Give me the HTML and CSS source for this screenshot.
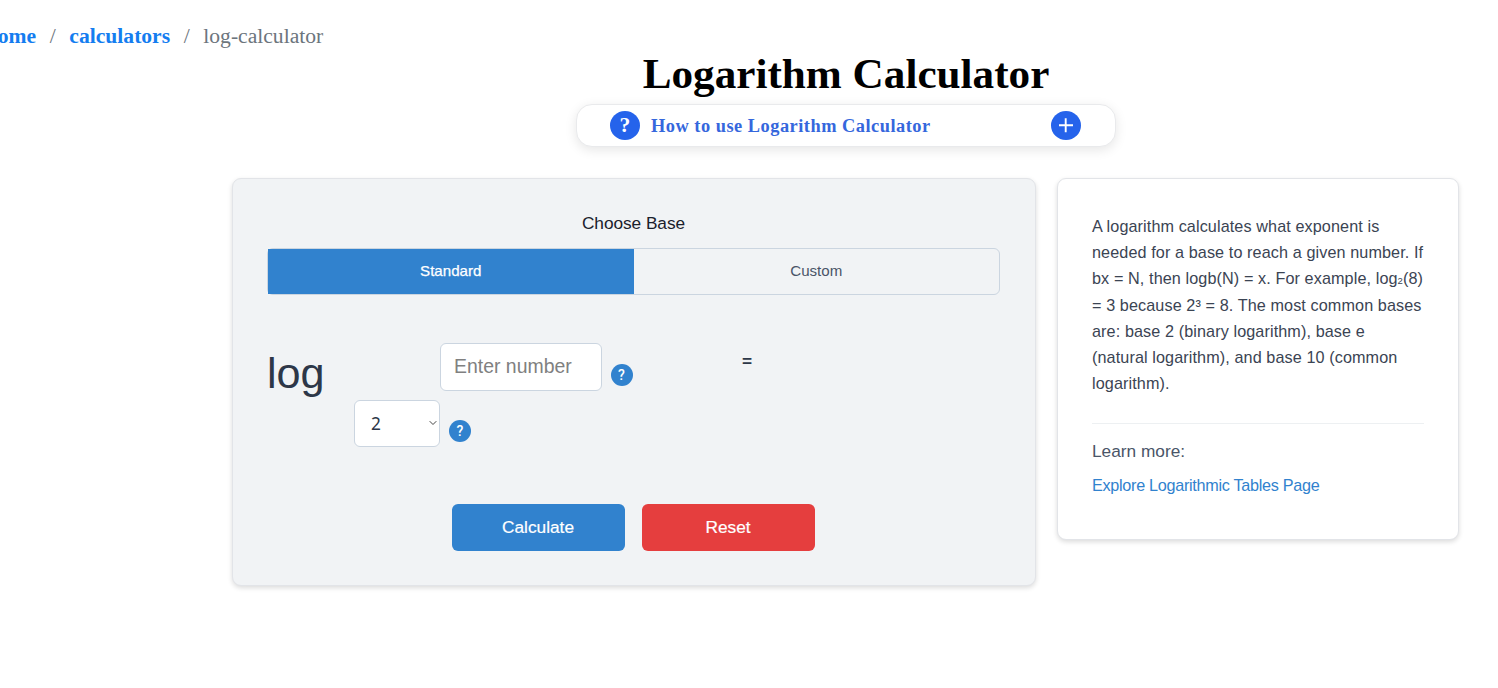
FILE: index.html
```html
<!DOCTYPE html>
<html lang="en">
<head>
<meta charset="utf-8">
<title>Logarithm Calculator</title>
<link rel="stylesheet" href="styles.css">
</head>
<body>
<nav class="breadcrumb"><a href="#">Home</a><i>/</i><a href="#">calculators</a><i>/</i><span>log-calculator</span></nav>
<h1>Logarithm Calculator</h1>
<section class="howto">
  <span class="disc">?</span>
  <span class="howto-title">How to use Logarithm Calculator</span>
  <span class="disc"><svg width="30" height="30" viewBox="0 0 30 30"><path d="M14.7 7.3v14M8 14.3h14" stroke="#fff" stroke-width="1.9"/></svg></span>
</section>
<main class="layout">
  <section class="card calc">
    <h2>Choose Base</h2>
    <div class="tabs"><button class="tab active">Standard</button><button class="tab">Custom</button></div>
    <div class="expression">
      <span class="log">log</span>
      <div class="base"><button class="select"><span>2</span><svg width="8" height="6" viewBox="0 0 8 6"><path d="M.7 1.2 4 4.5 7.3 1.2" fill="none" stroke="#444" stroke-width="1"/></svg></button><span class="tip">?</span></div>
      <div class="value"><input type="text" placeholder="Enter number"><span class="tip">?</span></div>
      <span class="equals">=</span>
    </div>
    <div class="actions"><button class="btn primary">Calculate</button><button class="btn danger">Reset</button></div>
  </section>
  <aside class="card info">
    <p>A logarithm calculates what exponent is<br>needed for a base to reach a given number. If<br>bx = N, then logb(N) = x. For example, log<span class="low">2</span>(8)<br>= 3 because 2³ = 8. The most common bases<br>are: base 2 (binary logarithm), base e<br>(natural logarithm), and base 10 (common<br>logarithm).</p>
    <div class="more"><span>Learn more:</span><a href="#">Explore Logarithmic Tables Page</a></div>
  </aside>
</main>
</body>
</html>
```
FILE: styles.css
```css
* { box-sizing: border-box; }
body { margin: 0; height: 688px; overflow: hidden; background: #fff; font-family: "Liberation Sans", Arial, sans-serif; color: #2d3748; }
button { font: inherit; border: 0; padding: 0; background: none; }
a { text-decoration: none; }

.breadcrumb { display: flex; height: 50px; padding-top: 24px; margin-left: -19px; font: 21.6px/25px "Liberation Serif", "Times New Roman", serif; color: #6c757d; white-space: nowrap; }
.breadcrumb a { color: #147df0; font-weight: 700; }
.breadcrumb i { width: 33.2px; text-align: center; font-style: normal; }
h1 { width: 540px; height: 54px; margin: 0 0 0 576px; font: 700 43.2px/47px "Liberation Serif", "Times New Roman", serif; color: #000; text-align: center; white-space: nowrap; }

.howto { display: flex; align-items: center; width: 540px; height: 43px; margin-left: 576px; padding: 0 34px 0 33px; border: 1px solid #e9eaec; border-radius: 16px; background: #fff; box-shadow: 0 3px 12px rgba(0,0,0,.1); font-family: "Liberation Serif", "Times New Roman", serif; }
.disc { flex: none; width: 30px; height: 29px; border-radius: 50%; background: #2563eb; color: #fff; font-weight: 700; font-size: 21.6px; line-height: 28px; text-align: center; overflow: hidden; }
.disc svg { display: block; }
.howto-title { flex: 1; margin-left: 11px; padding-top: 2px; font-size: 18.36px; font-weight: 700; letter-spacing: .5px; color: #3567dd; white-space: nowrap; }

.layout { display: flex; align-items: flex-start; gap: 21px; margin: 31px 0 0 232px; }
.card { border: 1px solid #e2e4e8; border-radius: 9px; box-shadow: 0 2px 5px rgba(0,0,0,.14); }
.calc { width: 804px; height: 408px; padding: 34px 36px 34px 34px; background: #f1f3f5; }
h2 { margin: 0; height: 35px; padding-left: 1px; font-size: 17.28px; line-height: 20px; font-weight: 400; color: #1a202c; text-align: center; letter-spacing: -.05px; }
.tabs { display: flex; width: 733px; height: 47px; border: 1px solid #cbd5e0; border-radius: 6px; }
.tab { flex: 1; padding-bottom: 2px; font-size: 15.12px; color: #4a5568; }
.tab.active { background: #3182ce; color: #fff; -webkit-text-stroke: .25px #fff; }

.expression { display: grid; grid-template-columns: 87px 86px 302px auto; grid-template-rows: 57px 47px; margin-top: 48px; }
.log { font-size: 43.2px; line-height: 60px; }
.base { grid-column: 2; grid-row: 2; display: flex; }
.value { grid-column: 3; grid-row: 1; display: flex; height: 48px; }
.select { display: flex; flex: none; align-items: center; justify-content: space-between; width: 86px; height: 47px; padding: 0 2px 1px 16px; border: 1px solid #cbd5e0; border-radius: 6px; background: #fff; font: 17.28px "Noto Sans", "Open Sans", sans-serif; color: #2d3748; }
input { width: 162px; height: 48px; border: 1px solid #cbd5e0; border-radius: 6px; padding: 0 13px 2px; background: #fff; font: 19.44px "Liberation Sans", Arial, sans-serif; }
input::placeholder { color: #808080; opacity: 1; }
.tip { flex: none; width: 22px; height: 22px; margin: 20px 0 0 9px; border-radius: 50%; background: #3182ce; color: #fff; font: 500 14px/22px Roboto, sans-serif; text-align: center; }
.value .tip { margin: 21px 0 0 8.5px; }
.equals { grid-column: 4; grid-row: 1; font-size: 17.28px; line-height: 36px; font-weight: 700; }
.actions { display: flex; justify-content: center; gap: 17px; margin-top: 57px; }
.btn { width: 173px; height: 47px; border-radius: 6px; color: #fff; font-size: 17.28px; -webkit-text-stroke: .2px #fff; }
.primary { background: #3182ce; }
.danger { background: #e53e3e; }

.info { width: 402px; height: 362px; padding: 34px; background: #fff; }
.info p { margin: 0; height: 210px; font-size: 16.2px; letter-spacing: .1px; line-height: 26.2px; white-space: nowrap; color: #3b4453; }
.low { font-size: 9.5px; line-height: 0; }
.more { display: flex; flex-direction: column; gap: 14px; border-top: 1px solid #edf0f2; padding-top: 17px; font-size: 16.2px; line-height: 20px; color: #4a5568; white-space: nowrap; }
.more span { font-size: 17.28px; letter-spacing: 0; }
.more a { color: #3182ce; letter-spacing: -.29px; }
```
